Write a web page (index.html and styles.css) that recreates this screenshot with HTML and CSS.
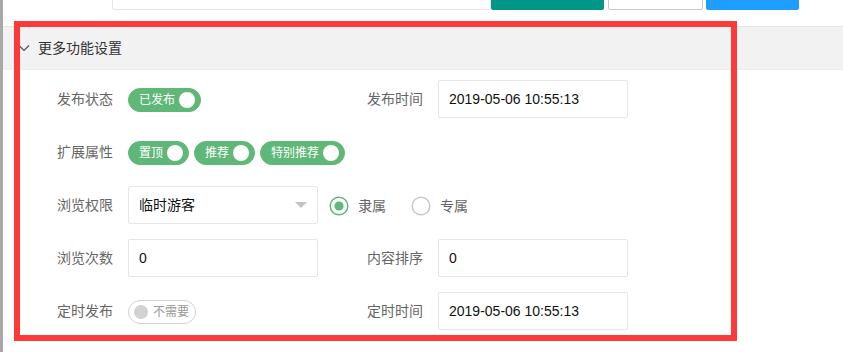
FILE: index.html
```html
<!DOCTYPE html>
<html lang="zh-CN">

<head>
  <meta charset="UTF-8">
  <title>更多功能设置</title>
  <link rel="stylesheet" href="styles.css">
</head>

<body>
  <div class="page">

    <div class="toolbar">
      <div class="search"></div>
      <span class="btn btn-teal"></span>
      <span class="btn btn-plain"></span>
      <span class="btn btn-blue"></span>
    </div>

    <div class="collapse">
      <div class="colla-title">
        <svg class="colla-icon" width="12" height="8" viewBox="0 0 12 8">
          <polyline points="1,1.5 6,6.5 11,1.5" fill="none" stroke="#555" stroke-width="1.2"/>
        </svg>
        更多功能设置
      </div>

      <div class="colla-content">
        <div class="form-item">
          <label class="form-label">发布状态</label>
          <div class="input-inline">
            <span class="switch on"><em>已发布</em><i></i></span>
          </div>
          <label class="form-label">发布时间</label>
          <div class="input-inline"><input class="input" value="2019-05-06 10:55:13"></div>
        </div>

        <div class="form-item">
          <label class="form-label">扩展属性</label>
          <div class="input-auto">
            <span class="switch on"><em>置顶</em><i></i></span>
            <span class="switch on"><em>推荐</em><i></i></span>
            <span class="switch on"><em>特别推荐</em><i></i></span>
          </div>
        </div>

        <div class="form-item">
          <label class="form-label">浏览权限</label>
          <div class="input-inline">
            <div class="select">临时游客<span class="select-arrow"></span></div>
          </div>
          <div class="input-auto">
            <span class="radio">
              <svg width="20" height="20" viewBox="0 0 20 20">
                <circle cx="10" cy="10" r="8.8" fill="#fff" stroke="#5fb878" stroke-width="1.5"/>
                <circle cx="10" cy="10" r="4.6" fill="#5fb878"/>
              </svg>
              隶属
            </span>
            <span class="radio">
              <svg width="20" height="20" viewBox="0 0 20 20">
                <circle cx="10" cy="10" r="8.8" fill="#fff" stroke="#c8c8c8" stroke-width="1.5"/>
              </svg>
              专属
            </span>
          </div>
        </div>

        <div class="form-item">
          <label class="form-label">浏览次数</label>
          <div class="input-inline"><input class="input" value="0"></div>
          <label class="form-label">内容排序</label>
          <div class="input-inline"><input class="input" value="0"></div>
        </div>

        <div class="form-item">
          <label class="form-label">定时发布</label>
          <div class="input-inline">
            <span class="switch"><i></i><em>不需要</em></span>
          </div>
          <label class="form-label">定时时间</label>
          <div class="input-inline"><input class="input" value="2019-05-06 10:55:13"></div>
        </div>
      </div>
    </div>

    <div class="annotation"></div>
  </div>
</body>
</html>
```

FILE: styles.css
```css
body {
  margin: 0;
  font-family: 'Liberation Sans', 'Noto Sans CJK SC', sans-serif;
  font-size: 14px;
  color: #666;
  background: #fff;
  overflow: hidden;
}
.page {
  position: relative;
  height: 352px;
  border-left: 3px solid #a8a8a8;
  overflow: hidden;
}
.toolbar {
  display: flex;
  height: 38px;
  margin-top: -28px;
  margin-bottom: 16px;
  padding-left: 109px;
}
.search {
  width: 377px;
  border: 1px solid #e6e6e6;
  border-radius: 0 0 2px 2px;
  background: #fff;
}
.btn {
  display: block;
  border-radius: 0 0 2px 2px;
}
.btn-teal {
  width: 113px;
  background: #009688;
}
.btn-plain {
  width: 93px;
  margin-left: 4px;
  border: 1px solid #c9c9c9;
  background: #fff;
}
.btn-blue {
  width: 93px;
  margin-left: 3px;
  background: #1e9fff;
}
.collapse {
  border-top: 1px solid #e6e6e6;
}
.colla-title {
  position: relative;
  height: 42px;
  line-height: 42px;
  padding-left: 35px;
  background: #f2f2f2;
  color: #333;
}
.colla-icon {
  position: absolute;
  left: 15px;
  top: 17px;
}
.colla-content {
  border-top: 1px solid #eee;
  padding: 10px 15px;
}
.form-item {
  display: flex;
  align-items: flex-start;
  height: 38px;
  margin-bottom: 15px;
}
.form-label {
  width: 80px;
  padding: 9px 15px;
  line-height: 20px;
  text-align: right;
}
.input-inline {
  display: flex;
  align-items: flex-start;
  width: 190px;
  margin-right: 10px;
}
.input-auto {
  display: flex;
  align-items: flex-start;
}
.input, .select {
  box-sizing: border-box;
  width: 190px;
  height: 38px;
  padding-left: 10px;
  border: 1px solid #e6e6e6;
  border-radius: 2px;
  background: #fff;
  font-family: inherit;
  font-size: 14px;
  color: #111;
  outline: none;
}
.select {
  position: relative;
  line-height: 36px;
}
.select-arrow {
  position: absolute;
  right: 10px;
  top: 15px;
  width: 0;
  height: 0;
  border-left: 6px solid transparent;
  border-right: 6px solid transparent;
  border-top: 6px solid #c2c2c2;
}
.switch {
  display: flex;
  align-items: center;
  height: 22px;
  margin-top: 8px;
  margin-right: 5px;
  padding: 0 5px;
  border: 1px solid #d2d2d2;
  border-radius: 20px;
  background: #fff;
}
.switch em {
  font-style: normal;
  font-size: 12px;
  line-height: 22px;
  color: #999;
  margin-left: 5px;
  margin-right: 1px;
}
.switch i {
  width: 14px;
  height: 14px;
  border-radius: 50%;
  background: #d2d2d2;
}
.switch.on {
  border-color: #5fb878;
  background: #5fb878;
}
.switch.on em {
  color: #fff;
  margin-left: 5px;
  margin-right: 4px;
}
.switch.on i {
  width: 16px;
  height: 16px;
  background: #fff;
}
.radio {
  display: flex;
  align-items: center;
  height: 28px;
  margin: 6px 10px 0 0;
  padding-right: 14px;
  line-height: 28px;
}
.radio svg {
  margin-left: 1px;
  margin-right: 9px;
}
.annotation {
  position: absolute;
  left: 11px;
  top: 21px;
  width: 711px;
  height: 308px;
  border: 6px solid #fd3a3a;
}
```
